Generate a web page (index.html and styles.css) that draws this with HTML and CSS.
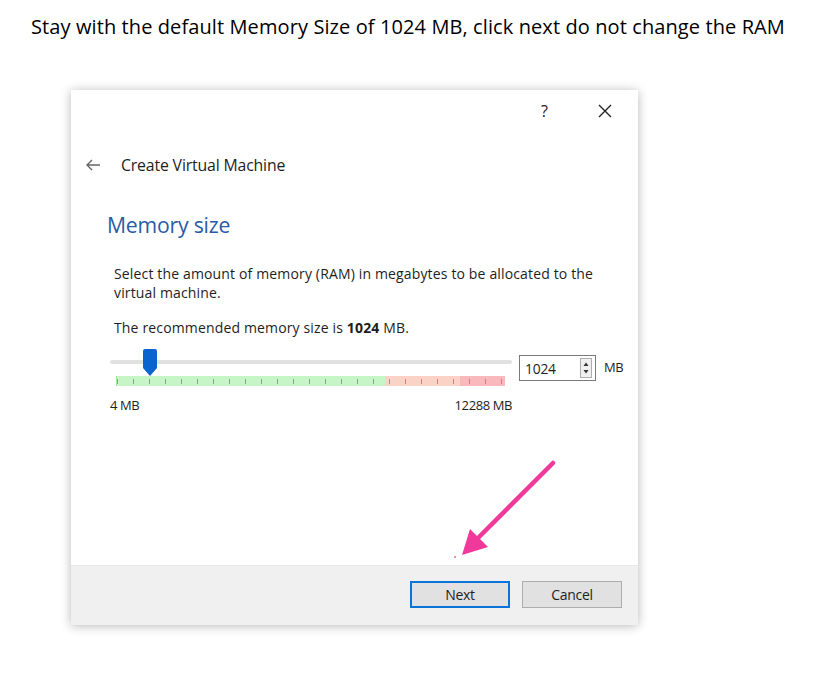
FILE: index.html
```html
<!DOCTYPE html>
<html>
<head>
<meta charset="utf-8">
<link rel="stylesheet" href="styles.css">
</head>
<body>
<div class="page">
  <p class="caption">Stay with the default Memory Size of 1024 MB, click next do not change the RAM</p>
  <div class="dialog">
    <div class="titlebar">
      <span class="help">?</span>
      <svg class="close" width="16" height="16" viewBox="0 0 16 16"><path d="M2 2 L14 14 M14 2 L2 14" stroke="#222" stroke-width="1.4" fill="none"/></svg>
    </div>
    <div class="wizard-head">
      <svg class="back" width="18" height="14" viewBox="0 0 18 14"><path d="M16 7 H3 M8 2 L3 7 L8 12" stroke="#666" stroke-width="1.4" fill="none"/></svg>
      <span class="wizard-title">Create Virtual Machine</span>
    </div>
    <div class="content">
      <h2 class="section">Memory size</h2>
      <p class="desc">Select the amount of memory (RAM) in megabytes to be allocated to the virtual machine.</p>
      <p class="rec">The recommended memory size is <b>1024</b> MB.</p>
      <div class="slider-row">
        <div class="slider">
          <div class="track"></div>
          <svg class="handle" width="16" height="27" viewBox="0 0 16 27"><path d="M1 2 Q1 0 3 0 H13 Q15 0 15 2 V19 L8 27 L1 19 Z" fill="#0a64d0"/></svg>
          <div class="scale">
            <div class="zone green"></div>
            <div class="zone orange"></div>
            <div class="zone red"></div>
            <div class="ticks"></div>
          </div>
          <div class="limits"><span>4 MB</span><span>12288 MB</span></div>
        </div>
        <div class="spin">
          <span class="spin-val">1024</span>
          <span class="spin-btns">
            <svg width="12" height="20" viewBox="0 0 12 20"><rect x="0.5" y="0.5" width="11" height="19" fill="#f0f0f0" stroke="#adadad"/><path d="M3.5 8 L6 4.5 L8.5 8 Z M3.5 12 L6 15.5 L8.5 12 Z" fill="#333"/></svg>
          </span>
        </div>
        <span class="unit">MB</span>
      </div>
    </div>
    <div class="footer">
      <button class="btn primary">Next</button>
      <button class="btn">Cancel</button>
    </div>
  </div>
  <svg class="annot" width="120" height="110" viewBox="0 0 120 110">
    <line x1="103" y1="4" x2="25" y2="82" stroke="#f0399a" stroke-width="4.5" stroke-linecap="round"/>
    <path d="M12 96 L20 70 L38 88 Z" fill="#f0399a"/>
    <circle cx="5" cy="98" r="0.8" fill="#c06"/>
  </svg>
</div>
</body>
</html>
```
FILE: styles.css
```css
* { box-sizing: border-box; }
html, body { margin: 0; padding: 0; background: #fff; }
.page { position: relative; width: 831px; height: 675px; overflow: hidden; }
.caption {
  margin: 0; padding: 14px 0 0 31px;
  font-family: "Open Sans", "Liberation Sans", sans-serif;
  font-size: 20px; color: #000; line-height: 26px; letter-spacing: 0.1px;
}
.dialog {
  margin: 50px 0 0 71px; width: 567px; height: 535px;
  background: #fff;
  box-shadow: 0 1px 10px rgba(0,0,0,0.28);
  display: flex; flex-direction: column;
  font-family: "Open Sans", "Liberation Sans", sans-serif; color: #1e1e1e;
}
.titlebar { height: 44px; display: flex; align-items: center; justify-content: flex-end; padding-right: 25px; gap: 49px; }
.help { font-size: 16px; color: #222; margin-top: -2px; }
.close { margin-top: -2px; }
.wizard-head { display: flex; align-items: center; height: 20px; margin-top: 21px; padding-left: 13px; }
.back { margin-right: 19px; }
.wizard-title { font-size: 15.8px; letter-spacing: -0.15px; color: #1e1e1e; }
.content { padding: 0 0 0 36px; flex: 1; }
.section { margin: 38px 0 0 0; font-weight: normal; font-size: 21.2px; color: #2b5ba6; line-height: 24px; letter-spacing: -0.2px; }
.desc { margin: 27px 0 0 7px; width: 486px; font-size: 14px; line-height: 19px; letter-spacing: 0.15px; }
.rec { margin: 16px 0 0 7px; font-size: 14px; line-height: 19px; letter-spacing: 0.15px; }
.rec b { font-weight: bold; }
.slider-row { display: flex; align-items: flex-start; margin-top: 10px; margin-left: 3px; }
.slider { position: relative; width: 402px; height: 70px; }
.track { margin-top: 13px; height: 4px; background: #e1e1e1; border-radius: 2px; }
.handle { position: absolute; left: 32px; top: 2px; }
.scale { position: relative; margin: 12px 0 0 6px; width: 389px; height: 10px; display: flex; }
.zone { height: 10px; }
.green { width: 269px; background: #c6f5c6; border-left: 1px solid #9ee89e; }
.orange { width: 75px; background: #fbd3c6; }
.red { width: 45px; background: #f8b8bc; }
.ticks {
  position: absolute; left: 0; top: 3px; width: 389px; height: 5px;
  background-image: repeating-linear-gradient(to right, #8e9e8e 0, #8e9e8e 1px, transparent 1px, transparent 16px);
  background-position: 1px 0;
}
.limits { display: flex; justify-content: space-between; margin-top: 11px; font-size: 13px; letter-spacing: -0.4px; color: #1e1e1e; line-height: 17px; }
.spin {
  margin: 8px 0 0 7px; width: 77px; height: 26px; border: 1px solid #7a7a7a;
  display: flex; align-items: center; justify-content: space-between; padding: 0 3px 0 5px; background: #fff;
}
.spin-val { font-size: 13.8px; letter-spacing: -0.2px; }
.spin-btns { display: flex; }
.spin-btns svg { display: block; }
.unit { margin: 12px 0 0 8px; font-size: 13px; letter-spacing: -0.4px; line-height: 17px; }
.footer {
  height: 60px; background: #f0f0f0; border-top: 1px solid #e8e8e8;
  display: flex; justify-content: flex-end; align-items: flex-start; gap: 12px;
  padding: 15px 16px 0 0;
}
.btn {
  width: 100px; height: 27px; background: #e1e1e1; border: 1px solid #adadad;
  font-family: "Open Sans", "Liberation Sans", sans-serif; font-size: 14px; color: #1e1e1e; letter-spacing: -0.3px; padding: 0;
}
.btn.primary { border: 2px solid #0a74d8; }
.annot { position: absolute; left: 450px; top: 459px; }
```
